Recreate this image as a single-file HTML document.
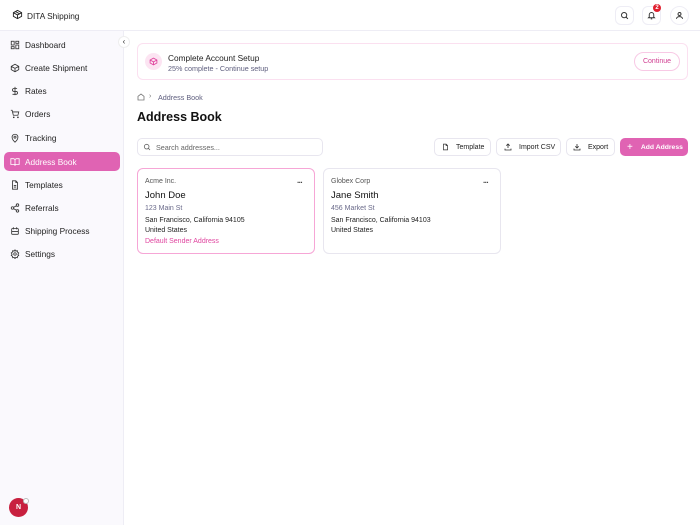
<!DOCTYPE html>
<html><head><style>
*{box-sizing:border-box;margin:0;padding:0}
body{width:700px;height:525px;overflow:hidden;font-family:"Liberation Sans",sans-serif;background:#fff;position:relative;color:#111}
.hdr{position:absolute;left:0;top:0;width:700px;height:31px;background:#fff;border-bottom:1px solid #eeedf5}
.side{position:absolute;left:0;top:31px;width:124px;height:494px;background:#faf9fd;border-right:1px solid #eeedf5}
.nav{position:absolute;left:4px;width:116px;height:19px;border-radius:5px;font-size:8.3px;color:#222;display:flex;align-items:center}
.nav svg{position:absolute;left:6px;top:4.5px}
.nav span{position:absolute;left:21px;top:5px}
.nav.act{background:#e063b3;color:#fff}
.abs{position:absolute}
.btn{position:absolute;top:138px;height:18px;border:1px solid #e8e6ef;border-radius:5px;font-size:7px;background:#fff;display:flex;align-items:center;color:#222;white-space:nowrap}
.card{position:absolute;top:168px;width:178px;height:86px;border:1px solid #e8e6ef;border-radius:6px;background:#fff}
.card .co{position:absolute;left:7px;top:9px;font-size:7px;color:#555}
.card .nm{position:absolute;left:7px;top:21px;font-size:9.5px;color:#111}
.card .st{position:absolute;left:7px;top:36px;font-size:7px;color:#6a6a8a}
.card .l{position:absolute;left:7px;font-size:7px;color:#222}
.dots{position:absolute;right:12px;top:9px;font-size:8px;color:#444;letter-spacing:-1px;font-weight:bold}
</style></head><body>
<div class="hdr">
<svg class="abs" style="left:12px;top:9px" width="11" height="11" viewBox="0 0 24 24" fill="none" stroke="#222" stroke-width="2"><path d="M21 8l-9-5-9 5v8l9 5 9-5z M3 8l9 5 9-5 M12 13v8 M7.5 5.5l9 5"/></svg>
<div class="abs" style="left:27px;top:11px;font-size:8.3px;color:#222">DITA Shipping</div>
<div class="abs" style="left:615px;top:6px;width:19px;height:19px;border:1px solid #eeedf5;border-radius:6px"></div>
<svg class="abs" style="left:620px;top:11px" width="9" height="9" viewBox="0 0 24 24" fill="none" stroke="#333" stroke-width="2.5"><circle cx="11" cy="11" r="7"/><path d="M16 16l5 5"/></svg>
<div class="abs" style="left:642px;top:6px;width:19px;height:19px;border:1px solid #eeedf5;border-radius:6px"></div>
<svg class="abs" style="left:647px;top:11px" width="9" height="9" viewBox="0 0 24 24" fill="none" stroke="#333" stroke-width="2.5"><path d="M6 16V10a6 6 0 0112 0v6l2 2H4z M10 21h4"/></svg>
<div class="abs" style="left:653px;top:4px;width:8px;height:8px;border-radius:50%;background:#e0202f;color:#fff;font-size:6px;font-weight:bold;text-align:center;line-height:8px">2</div>
<div class="abs" style="left:670px;top:6px;width:19px;height:19px;border:1px solid #eeedf5;border-radius:50%"></div>
<svg class="abs" style="left:675px;top:11px" width="9" height="9" viewBox="0 0 24 24" fill="none" stroke="#333" stroke-width="2.5"><circle cx="12" cy="8" r="4"/><path d="M4 21c0-4 4-6 8-6s8 2 8 6"/></svg>
</div>
<div class="side">
<div class="nav" style="top:4px"><svg width="10" height="10" viewBox="0 0 24 24" fill="none" stroke="#333" stroke-width="2"><rect x="3" y="3" width="7" height="9"/><rect x="14" y="3" width="7" height="5"/><rect x="14" y="12" width="7" height="9"/><rect x="3" y="16" width="7" height="5"/></svg><span>Dashboard</span></div>
<div class="nav" style="top:27px"><svg width="10" height="10" viewBox="0 0 24 24" fill="none" stroke="#333" stroke-width="2"><path d="M21 8l-9-5-9 5v8l9 5 9-5z M3 8l9 5 9-5 M12 13v8"/></svg><span>Create Shipment</span></div>
<div class="nav" style="top:50px"><svg width="10" height="10" viewBox="0 0 24 24" fill="none" stroke="#333" stroke-width="2"><path d="M12 2v20 M17 6H9.5a3.5 3.5 0 000 7h5a3.5 3.5 0 010 7H6"/></svg><span>Rates</span></div>
<div class="nav" style="top:73px"><svg width="10" height="10" viewBox="0 0 24 24" fill="none" stroke="#333" stroke-width="2"><circle cx="9" cy="20" r="1"/><circle cx="19" cy="20" r="1"/><path d="M2 3h3l3 12h11l2-8H6"/></svg><span>Orders</span></div>
<div class="nav" style="top:97px"><svg width="10" height="10" viewBox="0 0 24 24" fill="none" stroke="#333" stroke-width="2"><path d="M12 22s7-6 7-12a7 7 0 00-14 0c0 6 7 12 7 12z"/><circle cx="12" cy="10" r="2.5"/></svg><span>Tracking</span></div>
<div class="nav act" style="top:121px"><svg width="10" height="10" viewBox="0 0 24 24" fill="none" stroke="#fff" stroke-width="2"><path d="M2 4h6a4 4 0 014 4v13a3 3 0 00-3-3H2z M22 4h-6a4 4 0 00-4 4v13a3 3 0 013-3h7z"/></svg><span>Address Book</span></div>
<div class="nav" style="top:144px"><svg width="10" height="10" viewBox="0 0 24 24" fill="none" stroke="#333" stroke-width="2"><path d="M14 2H6v20h12V6z M14 2v4h4 M9 13h6 M9 17h6"/></svg><span>Templates</span></div>
<div class="nav" style="top:167px"><svg width="10" height="10" viewBox="0 0 24 24" fill="none" stroke="#333" stroke-width="2"><circle cx="18" cy="5" r="3"/><circle cx="6" cy="12" r="3"/><circle cx="18" cy="19" r="3"/><path d="M8.6 13.5l6.8 4 M15.4 6.5l-6.8 4"/></svg><span>Referrals</span></div>
<div class="nav" style="top:190px"><svg width="10" height="10" viewBox="0 0 24 24" fill="none" stroke="#333" stroke-width="2"><rect x="4" y="6" width="16" height="14" rx="2"/><path d="M8 3v5 M16 3v5 M4 13h16"/></svg><span>Shipping Process</span></div>
<div class="nav" style="top:213px"><svg width="10" height="10" viewBox="0 0 24 24" fill="none" stroke="#333" stroke-width="2"><circle cx="12" cy="12" r="3"/><path d="M12 2l2 3 3.5-1 .5 3.5 3 2-2 3 2 3-3 2-.5 3.5-3.5-1-2 3-2-3-3.5 1-.5-3.5-3-2 2-3-2-3 3-2 .5-3.5 3.5 1z"/></svg><span>Settings</span></div>
<div class="abs" style="left:9px;top:467px;width:19px;height:19px;border-radius:50%;background:#c8203f;color:#fff;font-size:7px;font-weight:bold;text-align:center;line-height:19px">N</div>
<div class="abs" style="left:23px;top:467px;width:6px;height:6px;border-radius:50%;background:#fff;border:1px solid #bbb"></div>
</div>
<div class="abs" style="left:118px;top:36px;width:12px;height:12px;border-radius:50%;background:#fff;border:1px solid #eee;font-size:8px;text-align:center;line-height:10px;color:#333">‹</div>

<div class="abs" style="left:137px;top:43px;width:551px;height:37px;border:1px solid #fbe0f0;border-radius:6px;background:#fff"></div>
<div class="abs" style="left:145px;top:53px;width:17px;height:17px;border-radius:50%;background:#fce4f2"></div>
<svg class="abs" style="left:149px;top:57px" width="9" height="9" viewBox="0 0 24 24" fill="none" stroke="#e0459f" stroke-width="2.4"><path d="M21 8l-9-5-9 5v8l9 5 9-5z M3 8l9 5 9-5 M12 13v8"/></svg>
<div class="abs" style="left:168px;top:53px;font-size:8.3px;color:#222">Complete Account Setup</div>
<div class="abs" style="left:168px;top:64px;font-size:7.2px;color:#5e5e7e">25% complete - Continue setup</div>
<div class="abs" style="left:634px;top:52px;width:46px;height:19px;border:1px solid #f8c9e5;border-radius:10px;font-size:7px;color:#d03d91;text-align:center;line-height:17px">Continue</div>

<svg class="abs" style="left:137px;top:93px" width="8" height="8" viewBox="0 0 24 24" fill="none" stroke="#777" stroke-width="2.5"><path d="M3 10l9-7 9 7v11H3z"/></svg>
<div class="abs" style="left:149px;top:93px;font-size:7px;color:#777">›</div>
<div class="abs" style="left:158px;top:93px;font-size:7.2px;color:#5e5e7e">Address Book</div>
<div class="abs" style="left:137px;top:110px;font-size:12.5px;font-weight:bold;color:#111">Address Book</div>

<div class="abs" style="left:137px;top:138px;width:186px;height:18px;border:1px solid #e8e6ef;border-radius:5px"></div>
<svg class="abs" style="left:143px;top:143px" width="8" height="8" viewBox="0 0 24 24" fill="none" stroke="#666" stroke-width="2.5"><circle cx="11" cy="11" r="7"/><path d="M16 16l5 5"/></svg>
<div class="abs" style="left:156px;top:143px;font-size:7.2px;color:#666">Search addresses...</div>

<div class="btn" style="left:434px;width:57px"><svg style="margin-left:7px" width="7" height="8" viewBox="0 0 24 24" fill="none" stroke="#333" stroke-width="2.5"><path d="M14 2H5v20h14V7z M14 2v5h5"/></svg><span style="margin-left:7px">Template</span></div>
<div class="btn" style="left:496px;width:65px"><svg style="margin-left:7px" width="8" height="8" viewBox="0 0 24 24" fill="none" stroke="#333" stroke-width="2.5"><path d="M3 17v4h18v-4 M12 15V3 M7 8l5-5 5 5"/></svg><span style="margin-left:7px">Import CSV</span></div>
<div class="btn" style="left:566px;width:49px"><svg style="margin-left:6px" width="8" height="8" viewBox="0 0 24 24" fill="none" stroke="#333" stroke-width="2.5"><path d="M3 17v4h18v-4 M12 3v12 M7 10l5 5 5-5"/></svg><span style="margin-left:7px">Export</span></div>
<div class="btn" style="left:620px;width:68px;background:#e063b3;border-color:#e063b3;color:#fff;font-weight:bold"><span style="margin-left:6px;font-size:10px;font-weight:normal">+</span><span style="margin-left:8px;font-size:6.8px">Add Address</span></div>

<div class="card" style="left:137px;border-color:#f6a6d6">
<div class="co">Acme Inc.</div><div class="dots">···</div>
<div class="nm">John Doe</div><div class="st">123 Main St</div>
<div class="l" style="top:48px">San Francisco, California 94105</div>
<div class="l" style="top:58px">United States</div>
<div class="l" style="top:69px;color:#e0459f">Default Sender Address</div>
</div>
<div class="card" style="left:323px">
<div class="co">Globex Corp</div><div class="dots">···</div>
<div class="nm">Jane Smith</div><div class="st">456 Market St</div>
<div class="l" style="top:48px">San Francisco, California 94103</div>
<div class="l" style="top:58px">United States</div>
</div>
</body></html>
